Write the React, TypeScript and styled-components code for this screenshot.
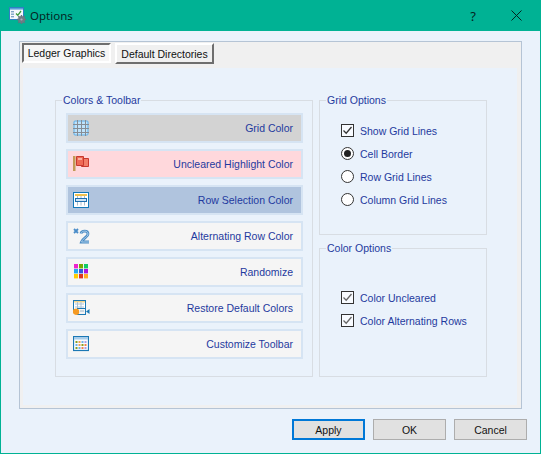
import React from 'react';
import styled, { createGlobalStyle } from 'styled-components';

const GlobalStyle = createGlobalStyle`
  html, body {
    margin: 0;
    padding: 0;
    background: #eaf2fb;
  }
`;

const uiFont = `"Liberation Sans", Arial, sans-serif`;
const inkBlue = '#1f3a9e';

const Window = styled.div`
  width: 541px;
  height: 454px;
  box-sizing: border-box;
  display: flex;
  flex-direction: column;
  background: #eaf2fb;
  border: 1px solid #00b294;
  border-top: none;
  font-family: ${uiFont};
  font-size: 10.5px;
  overflow: hidden;
`;

const TitleBar = styled.div`
  height: 31px;
  flex: none;
  margin: 0 -1px;
  display: flex;
  align-items: center;
  padding: 0 19px 0 9px;
  background: #00b294;
  color: #04251f;
  svg {
    display: block;
  }
`;

const TitleText = styled.span`
  margin-left: 4px;
  font-family: 'Noto Sans', sans-serif;
  font-size: 11.5px;
  flex: 1;
`;

const HelpGlyph = styled.span`
  font-family: 'Noto Sans', sans-serif;
  font-size: 13px;
  margin-right: 35px;
`;

const Body = styled.div`
  flex: 1;
  display: flex;
  flex-direction: column;
  padding: 10px 18px 0;
`;

const Panel = styled.div`
  width: 503px;
  height: 368px;
  box-sizing: border-box;
  display: flex;
  flex-direction: column;
  border: 1px solid #b5c4d5;
  background: #f0f0f0;
`;

const TabStrip = styled.div`
  height: 26px;
  flex: none;
  display: flex;
  align-items: flex-start;
  gap: 4px;
  padding: 1px 0 0 2px;
  box-sizing: border-box;
`;

const Tab = styled.div<{ $active?: boolean }>`
  box-sizing: border-box;
  display: flex;
  align-items: center;
  justify-content: center;
  color: #111;
  width: ${(p) => (p.$active ? 89 : 99)}px;
  height: ${(p) => (p.$active ? 20 : 21)}px;
  background: ${(p) => (p.$active ? '#f6f6f6' : '#f0f0f0')};
  border-style: solid;
  border-width: 2px;
  border-color: ${(p) =>
    p.$active ? '#6e6e6e #fff #fff #6e6e6e' : '#fff #6e6e6e #6e6e6e #fff'};
`;

const TabContent = styled.div`
  flex: 1;
  display: flex;
  gap: 6px;
  padding: 25px 0 0 32px;
  margin: 0 4px 3px 3px;
  background: #eaf2fb;
`;

const Group = styled.fieldset<{ $height: number; $width: number }>`
  box-sizing: border-box;
  margin: 0;
  min-width: 0;
  width: ${(p) => p.$width}px;
  height: ${(p) => p.$height}px;
  border: 1px solid #d8dde3;
  display: flex;
  flex-direction: column;
`;

const GroupTitle = styled.legend`
  padding: 0 1px;
  line-height: 14px;
  color: ${inkBlue};
`;

const ToolGroup = styled(Group)`
  padding: 6px 9px 0 10px;
  gap: 6px;
  ${GroupTitle} {
    margin-left: -4px;
  }
`;

const OptionGroup = styled(Group)<{ $top: number }>`
  padding: ${(p) => p.$top}px 0 0 21px;
  ${GroupTitle} {
    margin-left: -15px;
  }
`;

const RightColumn = styled.div`
  display: flex;
  flex-direction: column;
  gap: 6px;
`;

const ToolButton = styled.div<{ $fill: string }>`
  box-sizing: border-box;
  height: 30px;
  display: flex;
  align-items: center;
  justify-content: space-between;
  padding: 0 8px 0 5px;
  border: 2px solid #d6e4f3;
  background: ${(p) => p.$fill};
  color: ${inkBlue};
  svg {
    flex: none;
    display: block;
  }
`;

const OptionRow = styled.div`
  height: 23px;
  display: flex;
  align-items: center;
  gap: 6px;
  color: ${inkBlue};
`;

const Box = styled.span`
  width: 13px;
  height: 13px;
  box-sizing: border-box;
  border: 1px solid #333;
  background: #f8fbff;
  flex: none;
  svg {
    display: block;
  }
`;

const Radio = styled.span<{ $on?: boolean }>`
  width: 13px;
  height: 13px;
  box-sizing: border-box;
  border: 1px solid #333;
  border-radius: 50%;
  background: #fff;
  flex: none;
  display: flex;
  align-items: center;
  justify-content: center;
  &::after {
    content: '';
    width: 7px;
    height: 7px;
    border-radius: 50%;
    background: ${(p) => (p.$on ? '#222' : 'transparent')};
  }
`;

const Footer = styled.div`
  margin-top: 10px;
  margin-right: -5px;
  display: flex;
  justify-content: flex-end;
  gap: 8px;
`;

const DialogButton = styled.div<{ $primary?: boolean }>`
  box-sizing: border-box;
  width: 73px;
  height: 21px;
  display: flex;
  align-items: center;
  justify-content: center;
  background: #e1e1e1;
  color: #111;
  border: ${(p) => (p.$primary ? '2px solid #0078d7' : '1px solid #adadad')};
`;

const Check = ({ color }: { color: string }) => (
  <svg width="11" height="11" viewBox="0 0 11 11">
    <path d="M1.5 5.5 L4.2 8.2 L9.5 2" fill="none" stroke={color} strokeWidth="1.3" />
  </svg>
);

const AppIcon = () => (
  <svg width="17" height="17" viewBox="0 0 17 17">
    <rect x="0.5" y="0.5" width="14" height="12" fill="#f4f8fc" stroke="#2f7fc4" />
    <rect x="1" y="1" width="13" height="1.6" fill="#5b9fd8" />
    <rect x="2" y="4" width="3" height="1.4" fill="#7fa3c6" />
    <rect x="2" y="6.5" width="3" height="1.4" fill="#7fa3c6" />
    <rect x="2" y="9" width="3" height="1.4" fill="#7fa3c6" />
    <path d="M7 6.5 L8.8 8.3 L12 4" fill="none" stroke="#3c9a3c" strokeWidth="1.3" />
    <path d="M12.5 8V17M8 12.5H17M9.3 9.3L15.7 15.7M15.7 9.3L9.3 15.7" stroke="#66717c" strokeWidth="1.4" />
    <circle cx="12.5" cy="12.5" r="3.4" fill="#6f7a84" />
    <circle cx="12.5" cy="12.5" r="1.1" fill="#a8b2bb" />
  </svg>
);

const CloseIcon = () => (
  <svg width="11" height="11" viewBox="0 0 11 11">
    <path d="M0.5 0.5 L10.5 10.5 M10.5 0.5 L0.5 10.5" stroke="#04251f" strokeWidth="1" />
  </svg>
);

const GridIcon = () => (
  <svg width="16" height="16" viewBox="0 0 16 16">
    <rect x="1" y="1" width="14" height="14" rx="1" fill="#bfe3fb" stroke="#5aaeea" />
    <path d="M0 4.5H16M0 8.5H16M0 12.5H16M4.5 0V16M8.5 0V16M12.5 0V16" stroke="#868d95" />
  </svg>
);

const FlagIcon = () => (
  <svg width="17" height="16" viewBox="0 0 17 16">
    <rect x="0" y="0" width="2.5" height="15" fill="#c29a55" />
    <path d="M10.5 2.5H15.5V10.5H8.5V9.5" fill="#f27e68" stroke="#c8392e" />
    <path d="M3.5 0.5H10.5V9.5H3.5Z" fill="#ef6a55" stroke="#c8392e" />
    <rect x="5" y="2" width="4" height="2" fill="#fbb0a0" />
  </svg>
);

const RowIcon = () => (
  <svg width="16" height="16" viewBox="0 0 16 16">
    <rect x="0.5" y="0.5" width="15" height="15" fill="#fff" stroke="#1578b8" />
    <rect x="2" y="2" width="12" height="2" fill="#f2c14e" />
    <path d="M4.5 4V13.5M8 4V13.5M11.5 4V13.5" stroke="#a9bccb" />
    <rect x="2.5" y="6.5" width="11" height="3" fill="#cfe4f5" stroke="#1c6fb0" />
  </svg>
);

const AlternateIcon = () => (
  <svg width="17" height="16" viewBox="0 0 17 16">
    <path d="M1 1L5 5M5 1L1 5" stroke="#4a8cc8" strokeWidth="1.8" />
    <path
      d="M8 5.5C8.5 2.5 15 2 15 6C15 9 10 10 8.5 14H16"
      fill="none"
      stroke="#4c8cc4"
      strokeWidth="2.8"
    />
    <path
      d="M8 5.5C8.5 2.5 15 2 15 6C15 9 10 10 8.5 14H16"
      fill="none"
      stroke="#a8cdea"
      strokeWidth="1"
    />
  </svg>
);

const swatches = [
  '#ee22cc', '#77aa00', '#11cc66',
  '#22aaee', '#3355dd', '#aa11dd',
  '#ffcc00', '#dd3322', '#ffaa22',
];

const PaletteIcon = () => (
  <svg width="16" height="16" viewBox="0 0 16 16">
    {swatches.map((c, i) => (
      <rect
        key={c}
        x={1 + (i % 3) * 5}
        y={Math.floor(i / 3) * 5}
        width="4"
        height="4.4"
        fill={c}
      />
    ))}
  </svg>
);

const RestoreIcon = () => (
  <svg width="17" height="16" viewBox="0 0 17 16">
    <rect x="0.5" y="0.5" width="12" height="12" fill="#fff" stroke="#1c78b4" />
    <rect x="1" y="1" width="11" height="1.5" fill="#f2d48a" />
    <path d="M2 4H11M2 7H11M4.5 2V12M8 2V12" stroke="#a9c2d6" />
    <rect x="4.5" y="8.5" width="8" height="6" fill="#f5f5f5" stroke="#1c78b4" />
    <path d="M7 11H11" stroke="#9db6c9" />
    <path d="M13 11.5L16.5 9V14Z" fill="#1c78b4" />
    <circle cx="3" cy="11.7" r="3.2" fill="#f59a23" />
  </svg>
);

const calendarCells = [
  '#8aa020', '#f2a050', '#6fb0e8', '#b09be8',
  '#6fb0e8', '#f2a050', '#8aa020', '#f28050',
  '#8aa020', '#6fb0e8', '#f28050', '#b09be8',
];

const CustomizeIcon = () => (
  <svg width="16" height="16" viewBox="0 0 16 16">
    <rect x="0.5" y="0.5" width="15" height="14" fill="#fafcfe" stroke="#1c78b4" strokeWidth="1.2" />
    <rect x="1" y="1" width="14" height="2.5" fill="#a8cdea" />
    {calendarCells.map((c, i) => (
      <rect
        key={i}
        x={2.5 + (i % 4) * 3}
        y={5 + Math.floor(i / 4) * 3}
        width="2"
        height="2"
        fill={c}
      />
    ))}
  </svg>
);

const tools = [
  { label: 'Grid Color', fill: '#d3d3d3', icon: <GridIcon /> },
  { label: 'Uncleared Highlight Color', fill: '#ffd8dc', icon: <FlagIcon /> },
  { label: 'Row Selection Color', fill: '#b0c4de', icon: <RowIcon /> },
  { label: 'Alternating Row Color', fill: '#f5f5f5', icon: <AlternateIcon /> },
  { label: 'Randomize', fill: '#f5f5f5', icon: <PaletteIcon /> },
  { label: 'Restore Default Colors', fill: '#f5f5f5', icon: <RestoreIcon /> },
  { label: 'Customize Toolbar', fill: '#f5f5f5', icon: <CustomizeIcon /> },
];

const App = (): React.ReactElement => (
  <>
    <GlobalStyle />
    <Window>
      <TitleBar>
        <AppIcon />
        <TitleText>Options</TitleText>
        <HelpGlyph>?</HelpGlyph>
        <CloseIcon />
      </TitleBar>
      <Body>
        <Panel>
          <TabStrip>
            <Tab $active>Ledger Graphics</Tab>
            <Tab>Default Directories</Tab>
          </TabStrip>
          <TabContent>
            <ToolGroup $width={258} $height={284}>
              <GroupTitle>Colors &amp; Toolbar</GroupTitle>
              {tools.map((t) => (
                <ToolButton key={t.label} $fill={t.fill}>
                  {t.icon}
                  <span>{t.label}</span>
                </ToolButton>
              ))}
            </ToolGroup>
            <RightColumn>
              <OptionGroup $width={168} $height={142} $top={12}>
                <GroupTitle>Grid Options</GroupTitle>
                <OptionRow>
                  <Box>
                    <Check color="#333" />
                  </Box>
                  Show Grid Lines
                </OptionRow>
                <OptionRow>
                  <Radio $on />
                  Cell Border
                </OptionRow>
                <OptionRow>
                  <Radio />
                  Row Grid Lines
                </OptionRow>
                <OptionRow>
                  <Radio />
                  Column Grid Lines
                </OptionRow>
              </OptionGroup>
              <OptionGroup $width={168} $height={136} $top={31}>
                <GroupTitle>Color Options</GroupTitle>
                <OptionRow>
                  <Box>
                    <Check color="#666" />
                  </Box>
                  Color Uncleared
                </OptionRow>
                <OptionRow>
                  <Box>
                    <Check color="#666" />
                  </Box>
                  Color Alternating Rows
                </OptionRow>
              </OptionGroup>
            </RightColumn>
          </TabContent>
        </Panel>
        <Footer>
          <DialogButton $primary>Apply</DialogButton>
          <DialogButton>OK</DialogButton>
          <DialogButton>Cancel</DialogButton>
        </Footer>
      </Body>
    </Window>
  </>
);

export default App;
